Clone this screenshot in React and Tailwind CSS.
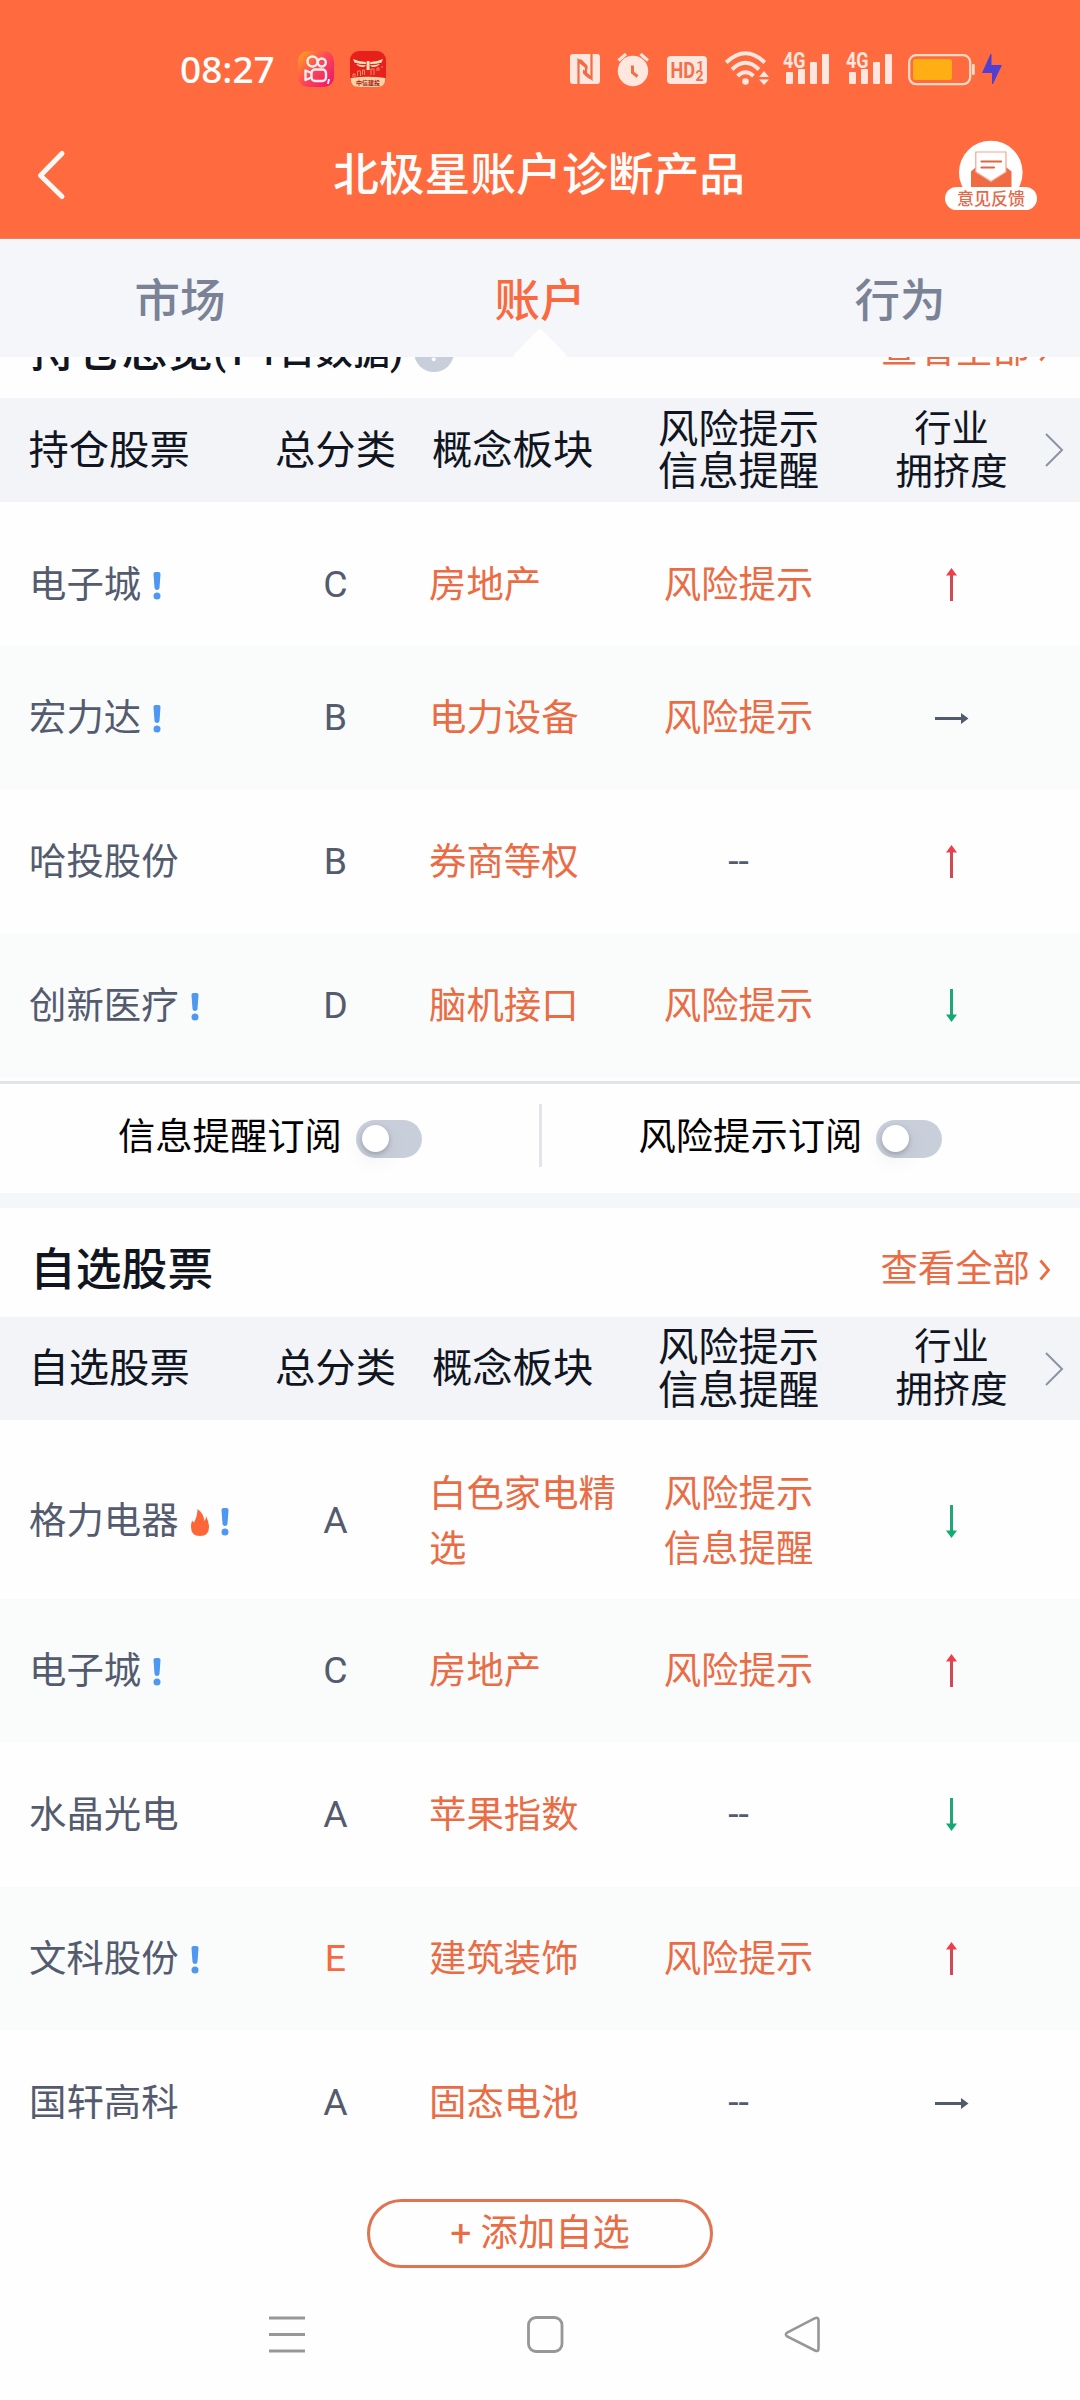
import React from "react";

const GRID = "grid grid-cols-[245px_181px_193px_239px_187px_35px] items-center";

function StatusBar() {
  return (
    <div className="flex h-[110px] items-start pt-[50px] pl-[180px]">
      <span className="-mt-[2px] w-[98px] font-['Noto_Sans'] text-[37px] font-medium leading-[42px] text-white">08:27</span>
      <svg className="ml-[20px] mt-px h-[36px] w-[36px]" viewBox="0 0 36 36">
        <defs>
          <linearGradient id="ks" x1="0" y1="0" x2="1" y2="0.9">
            <stop offset="0" stopColor="#ffa61c" />
            <stop offset="0.5" stopColor="#fb4a55" />
            <stop offset="1" stopColor="#f0126e" />
          </linearGradient>
        </defs>
        <rect width="36" height="36" rx="10" fill="url(#ks)" />
        <g fill="none" stroke="#ffeef0" strokeWidth="2.4" strokeLinejoin="round">
          <circle cx="14.5" cy="10.5" r="5" />
          <circle cx="23.8" cy="11.5" r="4" />
          <rect x="13.5" y="18.5" width="14.5" height="11.5" rx="3.5" />
          <path d="M13.5 22 L7.5 19.5 V29 L13.5 26.5" />
        </g>
        <path d="M30 28 h2 l-1 5 h-2z" fill="#ffeef0" />
      </svg>
      <svg className="ml-[16px] mt-px h-[36px] w-[36px]" viewBox="0 0 36 36">
        <rect width="36" height="36" rx="9" fill="#e8201c" />
        <path d="M0.500 27 Q18 24.500 35.500 27 Q35.500 36 27 36 H9 Q0.500 36 0.500 27z" fill="#fbd3a4" />
        <path d="M3 8 Q8 10.500 15.500 11 L16 13 Q9 13 4.500 11.500z M33 8 Q28 10.500 20.500 11 L20 13 Q27 13 31.500 11.500z M6 13 Q11 14.500 16 14 L14 16 Q9 16.500 6 13z M30 13 Q25 14.500 20 14 L22 16 Q27 16.500 30 13z" fill="#fde6bd" />
        <rect x="16.600" y="10" width="3" height="9" fill="#fde6bd" />
        <path d="M3 26v-3h2v3M7.500 25v-5h3v5M12.500 24v-5h2v5M21 24v-6h3v6M27 20v-3h2v3M32 17v-2" fill="none" stroke="#f38a63" strokeWidth="1" />
        <text x="18" y="33.500" fontSize="6" fontWeight="700" fill="#a3241a" textAnchor="middle" fontFamily="Noto Sans CJK SC">中信建投</text>
      </svg>

      <svg className="ml-[184px] mt-[4px] h-[30px] w-[30px]" viewBox="570 54 30 30">
        <rect x="570" y="54" width="30" height="30" rx="3" fill="#ffe6de" />
        <path d="M578.500 84 V60.500 L586 67 V76 M591.500 54 V78.500 L583.500 71" fill="none" stroke="#f36b42" strokeWidth="2.200" />
        <path d="M578 60 Q580 58.500 582 60 L587.500 65.500 V69.500 L578 62z M592 79 Q590 79.500 588 78 L583 73.500 V69.500 L592 77z" fill="#f36b42" />
      </svg>
      <svg className="ml-[17px] mt-[1px] h-[36px] w-[33px]" viewBox="617 51 33 36">
        <circle cx="633" cy="71" r="15.200" fill="#ffe6de" />
        <path d="M618.500 60.500 L626 54 M648 60.500 L640.500 54" stroke="#ffe6de" strokeWidth="3" />
        <path d="M632.500 65.500 V72.500 L637.500 76.500" fill="none" stroke="#f0703f" strokeWidth="3" />
      </svg>
      <svg className="ml-[17px] mt-[6px] h-[28px] w-[40px]" viewBox="0 0 40 28">
        <rect width="40" height="28" rx="4" fill="#ffe6de" />
        <text x="3.500" y="22" fontFamily="Roboto" fontWeight="700" fontSize="22" textLength="24.500" lengthAdjust="spacingAndGlyphs" fill="#f0714b">HD</text>
        <text x="29.500" y="13.500" fontFamily="Roboto" fontWeight="700" fontSize="13" fill="#f0714b">1</text>
        <text x="28.500" y="25" fontFamily="Roboto" fontWeight="700" fontSize="14" fill="#f0714b">2</text>
      </svg>
      <svg className="ml-[17px] mt-0 h-[36px] w-[46px]" viewBox="724 50 46 36">
        <g fill="none" stroke="#ffe6de" strokeWidth="4">
          <path d="M726.200 62.500 Q745.500 44 764.800 62.500" />
          <path d="M732 69.500 Q745.500 56 759 69.500" />
          <path d="M737.500 76 Q745.500 68.500 753.500 76" />
        </g>
        <circle cx="745.500" cy="81.500" r="3.300" fill="#ffe6de" />
        <path d="M764 71 l5 6 h-10z M764 85 l5 -5.500 h-10z" fill="#ffe6de" />
      </svg>
      <Signal className="ml-[12px]" />
      <Signal className="ml-[15px]" />
      <svg className="ml-[14px] mt-[3px] h-[33px] w-[69px]" viewBox="907 53 69 33">
        <rect x="909.200" y="55.200" width="61" height="29" rx="7" fill="none" stroke="#ffd9c4" strokeWidth="2.300" />
        <rect x="913" y="59" width="39" height="21" rx="2.500" fill="#ffae14" />
        <rect x="972" y="64" width="2.800" height="11" rx="1" fill="#ffd9c4" />
      </svg>
      <svg className="ml-[6px] mt-[4px] h-[30px] w-[20px]" viewBox="0 0 20 30">
        <path d="M8.500 0 L9.500 0 L9.500 11 L20 11 L11 30 L10 30 L10 19 L0 19z" fill="#4f40d3" />
      </svg>
    </div>
  );
}

function Signal({ className }) {
  return (
    <svg className={className + " -mt-[10px] h-[46px] w-[48px]"} viewBox="782 40 48 46">
      <text x="783" y="68" fontFamily="Roboto" fontWeight="700" fontSize="22" textLength="22.500" lengthAdjust="spacingAndGlyphs" fill="#ffe6de">4G</text>
      <g fill="#ffe6de">
        <rect x="786" y="72" width="7" height="12" rx="1" />
        <rect x="798" y="69" width="7" height="15" rx="1" />
        <rect x="810" y="62" width="7" height="22" rx="1" />
        <rect x="822" y="54" width="7" height="30" rx="1" />
      </g>
    </svg>
  );
}

function TitleBar() {
  return (
    <div className="flex h-[128px] items-center justify-between pl-[35px] pr-[42px] pt-[2px]">
      <svg className="h-[52px] w-[99px]" viewBox="0 0 99 52">
        <path d="M27 4.500 L5.500 26.500 L27 47.500" fill="none" stroke="#fff7f3" strokeWidth="5" strokeLinecap="round" strokeLinejoin="round" />
      </svg>
      <h1 className="pt-[2px] text-[45.800px] font-medium leading-[60px] text-[#fffdfb]">北极星账户诊断产品</h1>
      <svg className="h-[72px] w-[94px]" viewBox="944 139 94 72">
        <circle cx="990.800" cy="172.500" r="31.800" fill="#fff" />
        <path d="M971 187 V171.500 L975.500 167.500 H1006.500 L1011.500 171.500 V187z" fill="#f06a42" />
        <path d="M975.800 152 H1006 V172 L991 181.500 L975.800 172z" fill="#fff" stroke="#f3a68f" strokeWidth="1.200" />
        <path d="M981.500 161.500 H1001 M981.500 167.500 H994" stroke="#e0653f" strokeWidth="2.200" strokeLinecap="round" />
        <rect x="945" y="187" width="92" height="23" rx="11.500" fill="#fff" />
        <text x="991" y="204.800" textAnchor="middle" fontFamily="Noto Sans CJK SC" fontWeight="500" fontSize="17" fill="#e2694a">意见反馈</text>
      </svg>
    </div>
  );
}

function Tabs() {
  return (
    <div className="relative z-10 grid h-[118px] grid-cols-3 bg-[#f4f6fa] pt-[33px] text-center text-[45.500px] font-medium leading-[60px] text-[#7a8296]">
      <span>市场</span>
      <span className="text-[#f96a41]">账户</span>
      <span>行为</span>
      <svg className="absolute bottom-0 left-[513px] h-[29px] w-[54px]" viewBox="0 0 54 29">
        <path d="M1 29 Q0 27.500 1.500 26 L24.500 2.500 Q27 0 29.500 2.500 L52.500 26 Q54 27.500 53 29z" fill="#fefefe" />
      </svg>
    </div>
  );
}

function SectionTitle({ children }) {
  return (
    <div className="flex h-[109px] items-center justify-between pl-[30px] pr-[29px] pt-[13px]">
      <div className="flex items-center pt-[3px] text-[45.800px] font-medium leading-[60px] text-[#10151f]">{children}</div>
      <div className="flex items-center text-[37.400px] leading-[50px] text-[#ea6c45]">
        查看全部
        <svg className="ml-[9px] mt-[2px] h-[22px] w-[12px]" viewBox="0 0 12 22">
          <path d="M1.500 1.500 L9.500 11 L1.500 20.500" fill="none" stroke="#ea6c45" strokeWidth="2.800" />
        </svg>
      </div>
    </div>
  );
}

function TableHead({ first, className }) {
  return (
    <div className={GRID + " bg-[#f2f4f8] text-[40.300px] leading-[42.500px] text-[#10151f] " + className}>
      <span className="pl-[28.500px] pt-[2px]">{first}</span>
      <span className="pt-[2px] text-center">总分类</span>
      <span className="pl-[6px] pt-[2px]">概念板块</span>
      <span className="pt-[2px] text-center">风险提示<br />信息提醒</span>
      <span className="pt-px text-center text-[37.300px] leading-[43px]">行业<br />拥挤度</span>
      <svg className="h-[34px] w-[20px]" viewBox="0 0 20 34">
        <path d="M1 1 L17 17 L1 33" fill="none" stroke="#8b93a3" strokeWidth="2" />
      </svg>
    </div>
  );
}

function Alert() {
  return (
    <svg className="ml-[12px] mt-[1px] h-[28px] w-[8px]" viewBox="0 0 8 28">
      <path d="M0.500 2 Q0.500 0 2.500 0 H5.500 Q7.500 0 7.500 2 L6.500 16 Q6 18 4 18 Q2 18 1.500 16z" fill="#4f98f2" />
      <circle cx="4" cy="24" r="3.500" fill="#4f98f2" />
    </svg>
  );
}

function Flame() {
  return (
    <svg className="ml-[12px] mt-[2px] h-[27px] w-[18px]" viewBox="0 0 18 27">
      <path d="M6.500 0 Q12.500 4 13.500 12 Q15 10.500 15 7 Q18 13 18 18 Q18 27 9 27 Q0 27 0 18 Q0 14 1.200 11.500 Q2 13 3 13.500 Q6.500 7 6.500 0z" fill="#fd6639" />
    </svg>
  );
}

function Arrow({ dir }) {
  if (dir === "right")
    return (
      <svg className="mt-[2px] h-[11px] w-[34px]" viewBox="0 0 34 11">
        <path d="M0 4 H26 V0 L33.500 5.500 L26 11 V7 H0z" fill="#525a6e" />
      </svg>
    );
  if (dir === "up")
    return (
      <svg className="h-[33px] w-[11px]" viewBox="0 0 11 33">
        <path d="M4 33 V7 H7 V33z" fill="#d04a56" />
        <path d="M5.500 0 L11 7.500 H0z" fill="#ed3f4a" />
      </svg>
    );
  return (
    <svg className="mt-px h-[33px] w-[11px]" viewBox="0 0 11 33">
      <path d="M4 0 V26 H7 V0z" fill="#22a578" />
      <path d="M5.500 33 L11 25.500 H0z" fill="#12aa71" />
    </svg>
  );
}

function Row({ name, hot, alert, grade, concept, risk, dir, className }) {
  return (
    <div className={GRID + " text-[37.400px] leading-[55px] text-[#545b6e] " + className}>
      <span className="flex items-center pl-[29px] pt-[2px]">
        {name}
        {hot && <Flame />}
        {alert && <Alert />}
      </span>
      <span className={grade === "E" ? "text-center text-[#f56a40]" : "text-center"}>{grade}</span>
      <span className="pl-[3px] pt-[2px] text-[#ea6c45]">{concept}</span>
      {risk ? (
        <span className="pt-[2px] text-center text-[#ea6c45]">
          {risk.map((r) => (
            <span key={r} className="block">{r}</span>
          ))}
        </span>
      ) : (
        <span className="text-center">--</span>
      )}
      <span className="flex justify-center"><Arrow dir={dir} /></span>
    </div>
  );
}

function Toggle() {
  return (
    <span className="ml-[14px] mt-[4px] flex h-[38px] w-[66px] shrink-0 items-center rounded-full bg-[#c9cfda] pl-[6px]">
      <span className="h-[27px] w-[27px] rounded-full bg-white shadow-[0_2px_5px_rgba(0,0,0,0.22),0_8px_22px_rgba(0,0,0,0.07)]" />
    </span>
  );
}

const RISK = "风险提示";
const INFO = "信息提醒";

export default function App() {
  return (
    <div className="flex h-[2400px] w-[1080px] flex-col overflow-hidden bg-[#fefefe] font-[Roboto,'Noto_Sans_CJK_SC',sans-serif]">
      <header className="h-[239px] border-b border-[#de8467] bg-[#ff6a3e]">
        <StatusBar />
        <TitleBar />
      </header>
      <Tabs />
      <main className="-mt-[68px]">
        <SectionTitle>
          持仓总览
          <span className="text-[37.300px]">(T-1日数据)</span>
          <span className="ml-[11px] flex h-[40px] w-[40px] items-center justify-center rounded-full bg-[#c9cfda] text-[28px] leading-[40px] text-white">?</span>
        </SectionTitle>
        <TableHead first="持仓股票" className="h-[104px]" />
        <Row className="h-[144px] pt-[20px]" name="电子城" alert grade="C" concept="房地产" risk={[RISK]} dir="up" />
        <Row className="h-[144px] bg-[#fafcfc] pb-[2px]" name="宏力达" alert grade="B" concept="电力设备" risk={[RISK]} dir="right" />
        <Row className="h-[144px] pb-[2px]" name="哈投股份" grade="B" concept="券商等权" dir="up" />
        <Row className="h-[144px] bg-[#fafcfc] pb-[2px]" name="创新医疗" alert grade="D" concept="脑机接口" risk={[RISK]} dir="down" />

        <div className="mt-[3px] flex h-[112px] border-t-[3px] border-[#e1e5e9] text-[37.300px] leading-[50px] text-black">
          <div className="flex h-[105px] w-[539px] items-center pl-[118px]">
            信息提醒订阅
            <Toggle />
          </div>
          <div className="mt-[20px] h-[63px] w-[3px] bg-[#e1e5ea]" />
          <div className="flex h-[105px] w-[538px] items-center pl-[96.500px]">
            风险提示订阅
            <Toggle />
          </div>
        </div>
        <div className="h-[15px] bg-[#f4f6fa]" />

        <SectionTitle>自选股票</SectionTitle>
        <TableHead first="自选股票" className="h-[103px]" />
        <Row className="h-[179px] pt-[22px]" name="格力电器" hot alert grade="A" concept="白色家电精选" risk={[RISK, INFO]} dir="down" />
        <Row className="h-[144px] bg-[#fafcfc] pb-[2px]" name="电子城" alert grade="C" concept="房地产" risk={[RISK]} dir="up" />
        <Row className="h-[144px] pb-[2px]" name="水晶光电" grade="A" concept="苹果指数" dir="down" />
        <Row className="h-[144px] bg-[#fafcfc] pb-[2px]" name="文科股份" alert grade="E" concept="建筑装饰" risk={[RISK]} dir="up" />
        <Row className="h-[144px] pb-[2px]" name="国轩高科" grade="A" concept="固态电池" dir="right" />

        <button className="mx-auto mt-[24px] flex h-[69px] w-[346px] items-center justify-center rounded-full border-[3px] border-[#e07350] text-[37.300px] text-[#ea6c45]">
          + 添加自选
        </button>
      </main>
      <nav className="mt-[48px] flex items-center pl-[269px]">
        <svg className="h-[37px] w-[36px]" viewBox="0 0 36 37">
          <path d="M0 2 H36 M0 18.500 H36 M0 35 H36" stroke="#979797" strokeWidth="3" />
        </svg>
        <svg className="ml-[222px] h-[37px] w-[37px]" viewBox="0 0 37 37">
          <rect x="1.500" y="1.500" width="33.500" height="34" rx="7.500" fill="none" stroke="#979797" strokeWidth="2.800" />
        </svg>
        <svg className="ml-[220px] h-[37px] w-[37px]" viewBox="0 0 37 37">
          <path d="M31 2.200 Q34.500 0.800 34.500 4.500 V32.500 Q34.500 36.200 31 34.500 L3.200 20.500 Q0.500 18.500 3.200 16.500z" fill="none" stroke="#979797" strokeWidth="2.600" />
        </svg>
      </nav>
    </div>
  );
}
